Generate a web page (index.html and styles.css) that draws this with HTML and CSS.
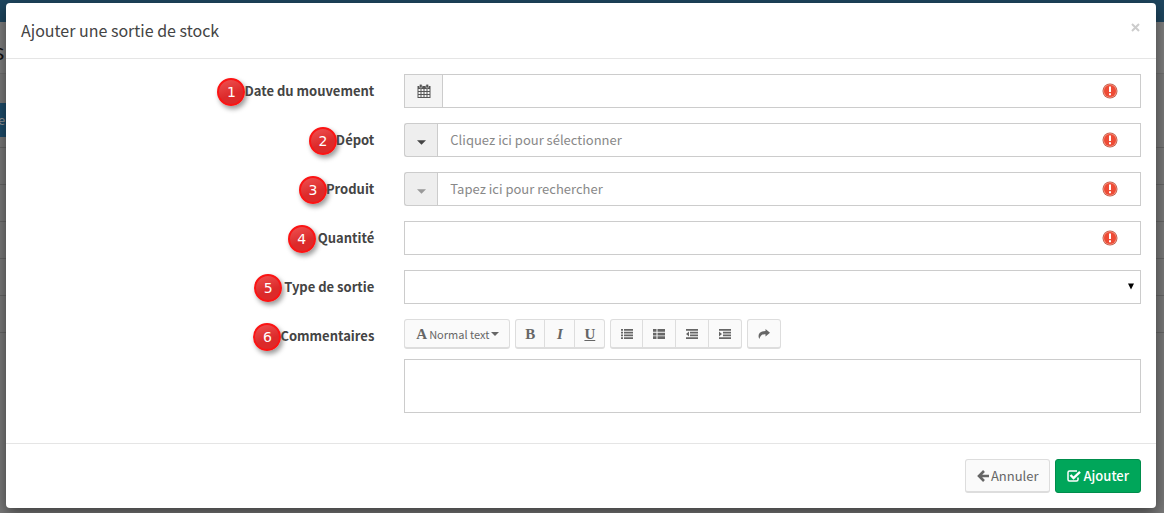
FILE: index.html
```html
<!DOCTYPE html>
<html lang="fr">
<head>
    <meta charset="utf-8">
    <title>Ajouter une sortie de stock</title>
    <link rel="stylesheet" href="styles.css">
</head>
<body>
    <!-- dimmed page under the dialog -->
    <div class="page" aria-hidden="true">
        <div class="topbar"></div>
        <div class="page-title">s</div>
        <div class="page-tools"><span class="page-btn">e</span></div>
        <div class="page-rows">
            <div></div>
            <div></div>
            <div></div>
            <div></div>
            <div></div>
        </div>
    </div>

    <!-- shared icons -->
    <svg class="sprite" aria-hidden="true">
        <symbol id="required-icon" viewBox="0 0 16 16">
            <circle cx="8" cy="8" r="7.5" fill="#c05a48"/>
            <circle cx="8" cy="8" r="6.7" fill="#f79a88"/>
            <circle cx="8" cy="8" r="6" fill="#ee4b35"/>
            <path d="M7 3.500h2v5.500H7zM7 10.300h2v2H7z" fill="#fff"/>
        </symbol>
        <symbol id="caret" viewBox="0 0 8 4">
            <path d="M0 0h8L4 4z" fill="currentColor"/>
        </symbol>
    </svg>

    <form class="modal" role="dialog" aria-labelledby="modalTitle">
        <div class="modal-header">
            <h1 id="modalTitle">Ajouter une sortie de stock</h1>
            <button type="button" class="close" aria-label="Fermer">
                <svg width="9" height="9" viewBox="0 0 9 9"><path d="M1 1l7 7M8 1L1 8" stroke="currentColor" stroke-width="2"/></svg>
            </button>
        </div>

        <div class="modal-body">
            <div class="form-group">
                <div class="label-col"><span class="marker">1</span><label for="date">Date du mouvement</label></div>
                <div class="field">
                    <span class="addon addon-date">
                        <svg width="14" height="14" viewBox="0 0 14 14">
                            <path d="M.5 2h13v12H.5z" fill="#555"/>
                            <path d="M1.500 5h2v2h-2zM4.500 5h2v2h-2zM7.500 5h2v2h-2zM10.500 5h2v2h-2zM1.500 8h2v2h-2zM4.500 8h2v2h-2zM7.500 8h2v2h-2zM10.500 8h2v2h-2zM1.500 11h2v2h-2zM4.500 11h2v2h-2zM7.500 11h2v2h-2zM10.500 11h2v2h-2z" fill="#f4f4f4"/>
                            <rect x="2.500" y=".3" width="2.600" height="3.600" rx="1" fill="#555" stroke="#f4f4f4" stroke-width=".5"/>
                            <rect x="8.900" y=".3" width="2.600" height="3.600" rx="1" fill="#555" stroke="#f4f4f4" stroke-width=".5"/>
                        </svg>
                    </span>
                    <input type="text" id="date">
                    <svg class="required"><use href="#required-icon"/></svg>
                </div>
            </div>
            <div class="form-group">
                <div class="label-col"><span class="marker">2</span><label for="depot">Dépot</label></div>
                <div class="field">
                    <button type="button" class="addon addon-caret" aria-label="Ouvrir la liste"><svg class="caret"><use href="#caret"/></svg></button>
                    <input type="text" id="depot" placeholder="Cliquez ici pour sélectionner">
                    <svg class="required"><use href="#required-icon"/></svg>
                </div>
            </div>
            <div class="form-group">
                <div class="label-col"><span class="marker">3</span><label for="produit">Produit</label></div>
                <div class="field">
                    <button type="button" class="addon addon-caret" aria-label="Ouvrir la liste" disabled><svg class="caret"><use href="#caret"/></svg></button>
                    <input type="text" id="produit" placeholder="Tapez ici pour rechercher">
                    <svg class="required"><use href="#required-icon"/></svg>
                </div>
            </div>
            <div class="form-group">
                <div class="label-col spaced"><span class="marker">4</span><label for="quantite">Quantité</label></div>
                <div class="field">
                    <input type="text" id="quantite">
                    <svg class="required"><use href="#required-icon"/></svg>
                </div>
            </div>
            <div class="form-group">
                <div class="label-col spaced"><span class="marker">5</span><label for="type">Type de sortie</label></div>
                <div class="field">
                    <select id="type"><option></option></select>
                    <svg class="select-arrow" viewBox="0 0 6 6"><path d="M0 0h6L3 6z"/></svg>
                </div>
            </div>
            <div class="form-group">
                <div class="label-col"><span class="marker">6</span><label for="commentaires">Commentaires</label></div>
                <div class="editor">
                    <div class="toolbar">
                        <div class="btn-group">
                            <button type="button" class="style-btn"><span class="glyph">A</span>Normal text<svg class="caret"><use href="#caret"/></svg></button>
                        </div>
                        <div class="btn-group">
                            <button type="button" class="glyph">B</button>
                            <button type="button" class="glyph italic">I</button>
                            <button type="button" class="glyph underline">U</button>
                        </div>
                        <div class="btn-group btn-icons">
                            <button type="button" aria-label="Liste à puces">
                                <svg width="12" height="10" viewBox="0 0 12 10"><path d="M0 0h2v1.700H0zM3 0h9v1.700H3zM0 2.800h2v1.700H0zM3 2.800h9v1.700H3zM0 5.600h2v1.700H0zM3 5.600h9v1.700H3zM0 8.300h2V10H0zM3 8.300h9V10H3z"/></svg>
                            </button>
                            <button type="button" aria-label="Liste numérotée">
                                <svg width="12" height="10" viewBox="0 0 12 10"><path d="M0 0h3.500v2.700H0zM4.500 0H12v2.700H4.500zM0 3.700h3.500v2.700H0zM4.500 3.700H12v2.700H4.500zM0 7.300h3.500V10H0zM4.500 7.300H12V10H4.500z"/></svg>
                            </button>
                            <button type="button" aria-label="Diminuer le retrait">
                                <svg width="12" height="10" viewBox="0 0 12 10"><path d="M0 0h12v1.700H0zM4 2.800h8v1.700H4zM4 5.600h8v1.700H4zM0 8.300h12V10H0zM3 2.500v5L0 5z"/></svg>
                            </button>
                            <button type="button" aria-label="Augmenter le retrait">
                                <svg width="12" height="10" viewBox="0 0 12 10"><path d="M0 0h12v1.700H0zM4 2.800h8v1.700H4zM4 5.600h8v1.700H4zM0 8.300h12V10H0zM0 2.500v5L3 5z"/></svg>
                            </button>
                        </div>
                        <div class="btn-group btn-icons">
                            <button type="button" aria-label="Insérer un lien">
                                <svg width="12" height="10" viewBox="0 0 12 10"><path d="M7.500 0L12 3.700 7.500 7.400V5.300C4.500 5 2.500 6 1.300 10 -.6 6 1 2.200 7.500 2z"/></svg>
                            </button>
                        </div>
                    </div>
                    <textarea id="commentaires"></textarea>
                </div>
            </div>
        </div>

        <div class="modal-footer">
            <button type="button" class="btn btn-default">
                <svg width="12" height="12" viewBox="0 0 12 12"><path d="M7 1L2 6l5 5M2 6h10" fill="none" stroke="currentColor" stroke-width="2.600"/></svg>
                Annuler
            </button>
            <button type="submit" class="btn btn-success">
                <svg width="14" height="12" viewBox="0 0 14 12" fill="none" stroke="currentColor"><path d="M10 1H2.500Q1 1 1 2.500v7Q1 11 2.500 11h7Q11 11 11 9.500V7.500" stroke-width="1.500"/><path d="M3.500 5l3 3L13 1.800" stroke-width="2.400"/></svg>
                Ajouter
            </button>
        </div>
    </form>
</body>
</html>
```
FILE: styles.css
```css
* {
    box-sizing: border-box;
}

body {
    margin: 0;
    font-family: "Noto Sans CJK JP", "Noto Sans", sans-serif;
    font-size: 13px;
    line-height: 20px;
    color: #444;
    background: #7a7a7a;
    overflow: hidden;
}

input, select, textarea, button {
    font: inherit;
    color: inherit;
}

button {
    cursor: pointer;
}

.sprite {
    position: absolute;
    width: 0;
    height: 0;
}

/* page under the dialog */
.page {
    position: absolute;
    inset: 0;
    overflow: hidden;
}

.topbar {
    height: 22px;
    background: #1e465f;
}

.page-title {
    height: 52px;
    line-height: 56px;
    font-size: 22px;
    color: #111;
    background: #7f7f7f;
    border-bottom: 1px solid #717171;
    text-indent: -6px;
}

.page-tools {
    padding: 29px 0 10px;
}

.page-btn {
    display: block;
    width: 20px;
    height: 34px;
    line-height: 34px;
    text-indent: -2px;
    color: #999;
    background: #1e4d6b;
}

.page-rows {
    border-top: 1px solid #676767;
}

.page-rows div {
    height: 37px;
    border-bottom: 1px solid #676767;
}

/* dialog */
.modal {
    position: relative;
    margin: 3px 8px 5px 6px;
    background: #fff;
    border-radius: 4px;
    box-shadow: 0 5px 15px rgba(0,0,0,0.5);
}

.modal-header {
    display: flex;
    justify-content: space-between;
    align-items: flex-start;
    padding: 15px;
    border-bottom: 1px solid #e5e5e5;
}

h1 {
    margin: 0;
    font-size: 16px;
    font-weight: normal;
    line-height: 25px;
}

.close {
    display: flex;
    padding: 5px 1px;
    border: 0;
    background: none;
    color: #ccc;
}

.modal-body {
    padding: 15px 0 30px;
}

.form-group {
    display: grid;
    grid-template-columns: 1fr 2fr;
    margin-bottom: 15px;
}

.form-group:last-child {
    margin-bottom: 0;
}

.label-col {
    display: flex;
    justify-content: flex-end;
    align-items: center;
    height: 34px;
    padding-right: 15px;
    font-weight: bold;
}

.label-col.spaced {
    gap: 3px;
}

.marker {
    width: 28px;
    height: 28px;
    margin: 2px -1px 0 0;
    border: 2px solid #fb1414;
    border-radius: 50%;
    background: linear-gradient(160deg, #ee5252, #dc2a2a 60%);
    box-shadow: 2px 3px 5px rgba(0,0,0,0.4);
    color: #fff;
    font-family: "DejaVu Sans", sans-serif;
    font-size: 14px;
    font-weight: normal;
    line-height: 24px;
    text-align: center;
}

.label-col label {
    position: relative;
}

.field {
    position: relative;
    display: flex;
    height: 34px;
    margin: 0 15px;
}

.field input,
.field select,
textarea {
    flex: 1;
    min-width: 0;
    padding: 6px 12px;
    border: 1px solid #ccc;
    border-radius: 0;
    background: #fff;
}

.field select {
    appearance: none;
}

::placeholder {
    color: #888;
    opacity: 1;
}

.addon {
    display: flex;
    justify-content: center;
    align-items: center;
    padding: 0;
    border: 1px solid #ccc;
    border-right: 0;
    background: #eee;
    color: #444;
}

.addon-date {
    width: 38px;
    background: #f4f4f4;
}

.addon-caret {
    width: 33px;
    padding-top: 5px;
    border-radius: 3px 0 0 3px;
}

.addon:disabled {
    color: #999;
}

.caret {
    width: 8px;
    height: 4px;
}

.addon .caret {
    width: 9px;
    height: 5px;
}

.required {
    position: absolute;
    top: 9px;
    right: 23px;
    width: 16px;
    height: 16px;
}

.select-arrow {
    position: absolute;
    top: 13px;
    right: 7px;
    width: 6px;
    height: 7px;
    fill: #000;
    pointer-events: none;
}

/* comment editor */
.editor {
    margin: 0 15px;
}

.toolbar {
    display: flex;
    gap: 5px;
    margin-bottom: 10px;
}

.btn-group {
    display: flex;
}

.btn-group button {
    display: flex;
    justify-content: center;
    align-items: center;
    min-width: 30px;
    height: 30px;
    padding: 0;
    border: 1px solid #ddd;
    border-bottom-width: 2px;
    border-left-width: 0;
    background: #fafafa;
    color: #666;
}

.btn-group button:first-child {
    border-left-width: 1px;
    border-radius: 3px 0 0 3px;
}

.btn-group button:last-child {
    border-radius: 0 3px 3px 0;
}

.btn-group button:only-child {
    border-radius: 3px;
}

.btn-group .style-btn {
    gap: 2px;
    padding: 0 10px 0 11px;
    font-size: 11px;
}

.btn-icons button {
    width: 33px;
}

.btn-icons button:only-child {
    width: 34px;
}

.btn-icons svg {
    fill: currentColor;
}

.glyph {
    font-family: "Liberation Serif", serif;
    font-size: 15px;
    font-weight: bold;
}

.btn-group .glyph {
    font-family: "Liberation Serif", serif;
    font-size: 15px;
    font-weight: bold;
}

.italic {
    font-style: italic;
}

.underline {
    text-decoration: underline;
}

textarea {
    display: block;
    width: 100%;
    height: 54px;
    resize: none;
}

.modal-footer {
    display: flex;
    justify-content: flex-end;
    gap: 5px;
    padding: 15px;
    border-top: 1px solid #e5e5e5;
}

.btn {
    display: flex;
    align-items: center;
    gap: 2px;
    height: 34px;
    padding: 0 11px;
    border: 1px solid #ddd;
    border-bottom-width: 2px;
    border-radius: 3px;
    background: #fafafa;
    color: #666;
}

.btn-success {
    background: #00a65a;
    border: 1px solid #008d4c;
    color: #fff;
    font-weight: 500;
}
```
